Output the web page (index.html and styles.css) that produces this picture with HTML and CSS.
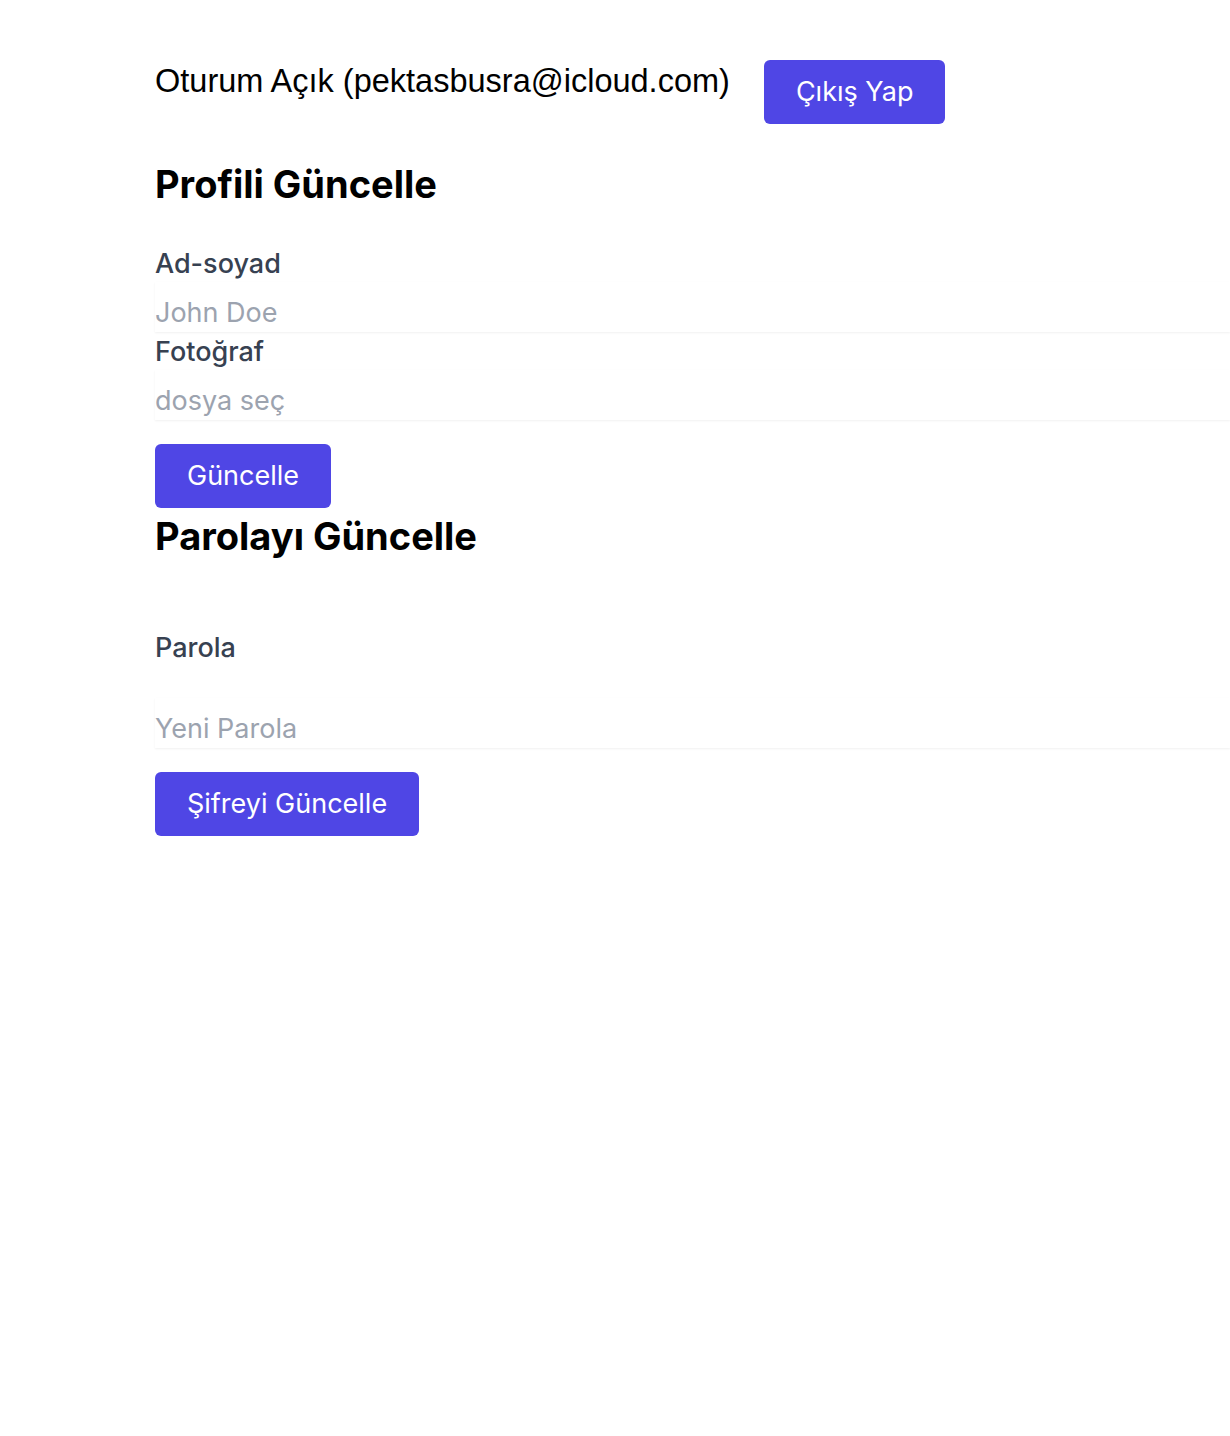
FILE: index.html
```html
<!DOCTYPE html>
<html lang="tr">
<head>
<meta charset="utf-8">
<title>Profil</title>
<link rel="stylesheet" href="styles.css">
</head>
<body>
<main class="page">
  <div class="session">
    <p class="session-text">Oturum Açık (pektasbusra@icloud.com)</p>
    <button class="btn btn-logout" type="button">Çıkış Yap</button>
  </div>

  <h2 class="title title-profile">Profili Güncelle</h2>
  <form class="form">
    <label class="label" for="name">Ad-soyad</label>
    <input class="input" id="name" type="text" placeholder="John Doe">
    <label class="label" for="photo">Fotoğraf</label>
    <input class="input" id="photo" type="text" placeholder="dosya seç">
    <button class="btn btn-form" type="button">Güncelle</button>
  </form>

  <h2 class="title title-password">Parolayı Güncelle</h2>
  <form class="form">
    <label class="label label-password" for="pw">Parola</label>
    <input class="input" id="pw" type="password" placeholder="Yeni Parola">
    <button class="btn btn-form" type="button">Şifreyi Güncelle</button>
  </form>
</main>
</body>
</html>
```

FILE: styles.css
```css
html, body {
  margin: 0;
  padding: 0;
  background: #ffffff;
  overflow-x: hidden;
}

.page {
  padding: 60px 0 0 155px;
  font-family: Inter, "Noto Sans", sans-serif;
}

.session {
  display: flex;
  align-items: flex-start;
}

.session-text {
  margin: 0;
  font-family: "Liberation Sans", Arial, sans-serif;
  font-size: 32.5px;
  line-height: 42px;
  color: #000;
}

.btn {
  background: #4f46e5;
  color: #fff;
  border: none;
  border-radius: 6px;
  font-family: Inter, "Noto Sans", sans-serif;
  font-size: 27px;
  line-height: 32px;
  padding: 16px 32px;
  cursor: pointer;
}

.btn-logout {
  margin-left: 34px;
}

.title {
  margin: 0;
  font-size: 38px;
  line-height: 48px;
  font-weight: 700;
  color: #000;
}

.title-profile {
  margin-top: 36px;
}

.title-password {
  margin-top: 4px;
}

.form {
  display: flex;
  flex-direction: column;
  align-items: flex-start;
}

.title-profile + .form {
  margin-top: 38px;
}

.title-password + .form {
  margin-top: 70px;
}

.label {
  font-size: 27px;
  line-height: 36px;
  font-weight: 500;
  color: #374151;
}

.input {
  box-sizing: border-box;
  width: 100%;
  border: none;
  outline: none;
  padding: 13px 0 1px;
  font-family: Inter, "Noto Sans", sans-serif;
  font-size: 27px;
  line-height: 36px;
  color: #111827;
  background: #fff;
  box-shadow: 0 1px 2px rgba(0, 0, 0, 0.06);
  margin-bottom: 2px;
}

.input::placeholder {
  color: #9ca3af;
}

.label-password {
  margin-bottom: 32px;
}

.btn-form {
  margin-top: 22px;
}
```
